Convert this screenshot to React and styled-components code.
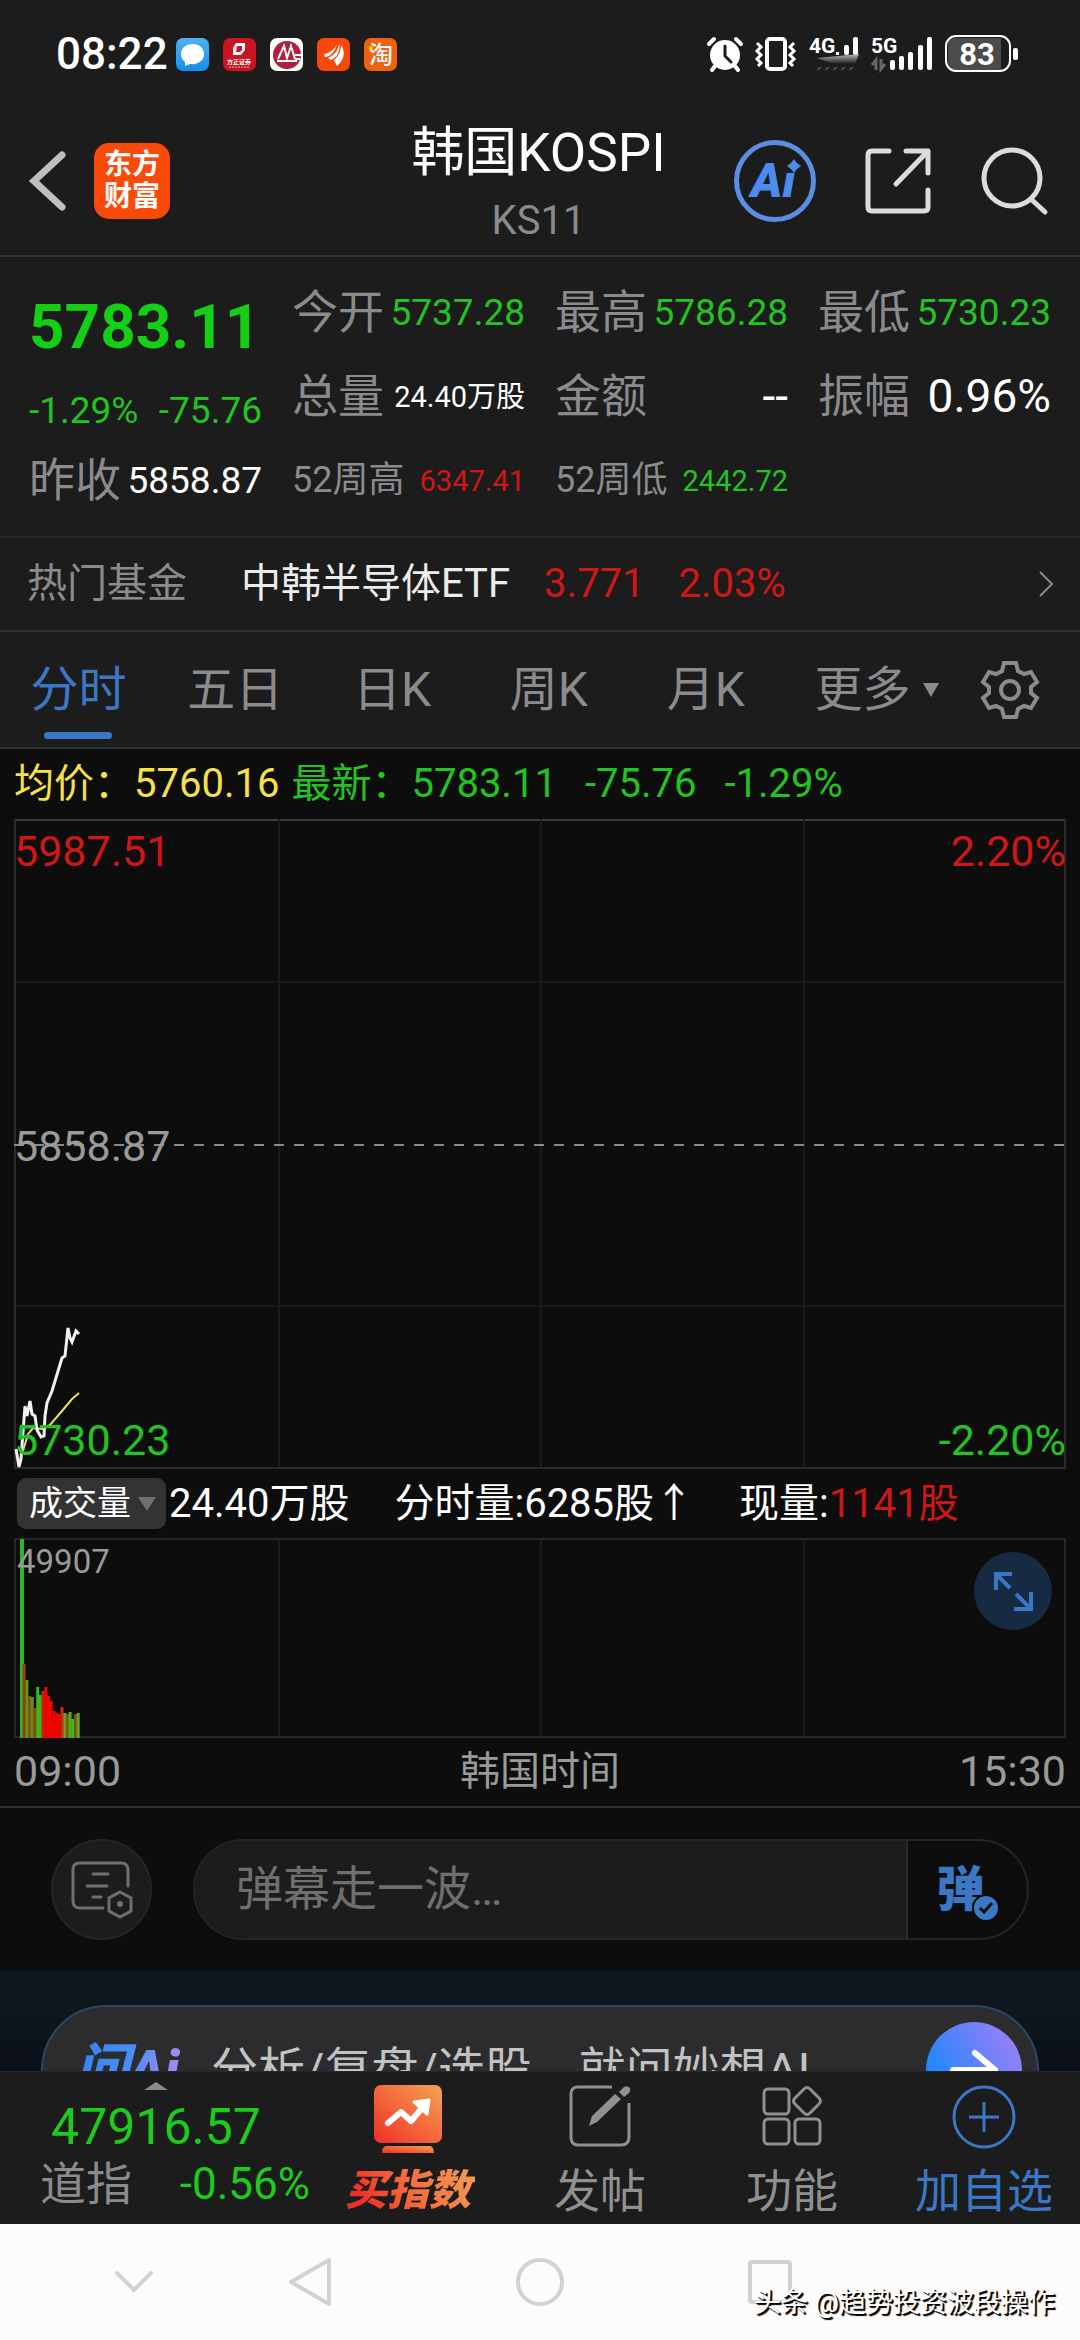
import React from 'react'
import styled, { createGlobalStyle } from 'styled-components'

const GREEN = '#22c322'
const RED = '#cf1717'
const BLUE = '#3a78c6'
const GREY = '#8b8b8d'

const stats = [
  { label: '今开', value: '5737.28', color: GREEN },
  { label: '最高', value: '5786.28', color: GREEN },
  { label: '最低', value: '5730.23', color: GREEN },
  { label: '总量', value: '24.40万股', color: '#fff', size: 29 },
  { label: '金额', value: '--', color: '#fff', size: 46 },
  { label: '振幅', value: '0.96%', color: '#fff', size: 46 },
  { label: '52周高', value: '6347.41', color: RED, size: 29, small: true },
  { label: '52周低', value: '2442.72', color: GREEN, size: 29, small: true },
]

const tabs = ['分时', '五日', '日K', '周K', '月K', '更多']

// minute volumes: [height, colour]
const volumes = [
  [199, '#2fb52a'], [74, '#9a3a10'], [58, '#5f9a1c'], [42, '#7d5a10'], [41, '#77841a'],
  [30, '#8a4a10'], [51, '#2fbf1a'], [43, '#4fae1c'], [47, '#d81c08'], [51, '#ee0500'],
  [42, '#ee0500'], [37, '#ee0500'], [27, '#ee0500'], [25, '#ee0500'], [24, '#ee0500'],
  [31, '#d42410'], [25, '#6e9a2a'], [24, '#7d5a10'], [26, '#4fae1c'], [19, '#2fbf1a'],
  [24, '#8a4a10'], [25, '#58a826'],
]

const priceLine =
  '2,630 5,648 7,640 9,613 11,587 13,597 16,582 18,595 21,597 23,611 27,618 30,617 31,597 33,584 38,572 48,539 51,537 54,509 56,519 58,523 62,512 65,515'
const avgLine = '9,632 14,615 19,609 28,610 36,606 48,592 58,580 65,574'

const App = () => {
  return (
    <Page>
      <GlobalStyle />
      <StatusBar />
      <Header />
      <Quote />
      <Fund href="#fund">
        <FundLabel>热门基金</FundLabel>
        <FundName>中韩半导体ETF</FundName>
        <FundValue>3.771</FundValue>
        <FundValue>2.03%</FundValue>
        <svg width="16" height="28" viewBox="0 0 16 28" fill="none" stroke="#8b8b8d" strokeWidth="2">
          <path d="M2 2L14 14L2 26" />
        </svg>
      </Fund>
      <Tabs>
        {tabs.map((name, i) => (
          <Tab key={name} $active={i === 0} $more={name === '更多'}>
            {name}
          </Tab>
        ))}
        <GearButton aria-label="设置">
          <svg width="58" height="60" viewBox="-29 -30 58 60" fill="none" stroke="#8b8b8d" strokeWidth="4">
            <path d="M-6 -27H6L8 -19L14 -16L21 -18L27 -8L21 -3V3L27 8L21 18L14 16L8 19L6 27H-6L-8 19L-14 16L-21 18L-27 8L-21 3V-3L-27 -8L-21 -18L-14 -16L-8 -19Z" />
            <circle r="9" />
          </svg>
        </GearButton>
      </Tabs>
      <Legend>
        <Part $color="#f7e04b">均价：5760.16</Part>
        <Part $color={GREEN}>最新：5783.11</Part>
        <Change>-75.76</Change>
        <Change>-1.29%</Change>
      </Legend>
      <PriceChart />
      <VolumeChart />
      <TimeRow>
        <TimeText>09:00</TimeText>
        <TimeZone>韩国时间</TimeZone>
        <TimeText>15:30</TimeText>
      </TimeRow>
      <Danmaku />
      <AskBanner />
      <BottomBar />
      <SystemNav />
    </Page>
  )
}

export default App

const StatusBar = () => (
  <Status>
    <Clock>08:22</Clock>
    <Apps>
      <svg width="33" height="33" viewBox="0 0 33 33">
        <defs>
          <linearGradient id="chat" x1="0" y1="0" x2="0" y2="1">
            <stop offset="0" stopColor="#4db2f5" />
            <stop offset="1" stopColor="#1290ec" />
          </linearGradient>
        </defs>
        <rect width="33" height="33" rx="7" fill="url(#chat)" />
        <path d="M17 6C10 6 5 10 5 16C5 20 7 22 9 24V28L14 26C23 27 28 22 28 16C28 10 23 6 17 6Z" fill="#fff" />
      </svg>
      <svg width="33" height="33" viewBox="0 0 33 33">
        <rect width="33" height="33" rx="7" fill="#cb1420" />
        <path d="M13 5H22V12L18 17H10V10Z M14 8L13 14H17L19 12V8Z" fill="#fff" fillRule="evenodd" />
        <text x="16" y="26" textAnchor="middle" fontSize="6" fontWeight="700" fill="#fff">方正证券</text>
        <path d="M6 29H27" stroke="#fff" strokeDasharray="2 1" opacity="0.7" />
      </svg>
      <svg width="33" height="33" viewBox="0 0 33 33">
        <rect width="33" height="33" rx="7" fill="#fff" />
        <circle cx="17" cy="17" r="14" fill="#b0213f" />
        <path d="M8 21L14 8L17 20L21 8L25 21M7 23H27M25 17H32M25 21H30" fill="none" stroke="#fff" strokeWidth="2" />
      </svg>
      <svg width="33" height="33" viewBox="0 0 33 33">
        <rect width="33" height="33" rx="7" fill="#f7480c" />
        <path d="M7 16C13 15 18 11 20 6C18 14 13 19 8 19ZM11 20C18 17 21 12 22 6C24 14 19 20 14 22ZM17 22C22 18 24 13 24 7C29 14 27 22 20 28Z" fill="#fff" />
      </svg>
      <svg width="33" height="33" viewBox="0 0 33 33">
        <rect width="33" height="33" rx="7" fill="#f0610f" />
        <text x="17" y="25" textAnchor="middle" fontSize="24" fontWeight="500" fill="#fff">淘</text>
        <circle cx="7" cy="10" r="2" fill="#ffe000" />
      </svg>
    </Apps>
    <Signals>
      <svg width="36" height="36" viewBox="0 0 36 36" fill="none" stroke="#fff" strokeLinecap="round">
        <path d="M8 30L5 34M28 30L31 34" strokeWidth="4" />
        <circle cx="18" cy="19" r="15" fill="#fff" stroke="none" />
        <path d="M2 8L7 3M34 8L29 3" strokeWidth="4" />
        <path d="M18 10V20L24 26" stroke="#1c1c1c" strokeWidth="3" />
      </svg>
      <svg width="42" height="36" viewBox="0 0 42 36" fill="none" stroke="#fff" strokeWidth="4">
        <rect x="12" y="3" width="18" height="30" rx="3" />
        <path d="M2 7L6 11L2 15L6 19L2 23L6 27L3 30M39 7L35 11L39 15L35 19L39 23L35 27L38 30" strokeWidth="3" />
      </svg>
      <svg width="50" height="36" viewBox="0 0 50 36">
        <defs>
          <linearGradient id="fade" x1="0" y1="0" x2="0" y2="1">
            <stop offset="0" stopColor="#bbb" />
            <stop offset="1" stopColor="#bbb" stopOpacity="0" />
          </linearGradient>
        </defs>
        <text x="0" y="17" fontSize="21" fontWeight="700" fill="#fff">4G</text>
        <rect x="27" y="16" width="3" height="3" fill="#fff" />
        <rect x="35" y="9" width="5" height="10" rx="2" fill="#fff" />
        <rect x="44" y="1" width="5" height="18" rx="2" fill="#fff" />
        <path d="M8 22L50 18L46 28L22 27Z" fill="url(#fade)" />
        <path d="M8 34L12 31M16 34L20 31M24 34L28 31M32 34L36 31M40 34L44 31" stroke="#4a4a4a" strokeWidth="2" />
      </svg>
      <svg width="62" height="36" viewBox="0 0 62 36">
        <text x="0" y="17" fontSize="21" fontWeight="700" fill="#fff">5G</text>
        <path d="M5 34V24L1 29M10 23V33L14 28" fill="none" stroke="#666" strokeWidth="3" />
        <g fill="#fff">
          <rect x="19" y="24" width="5" height="10" rx="2" />
          <rect x="28" y="20" width="5" height="14" rx="2" />
          <rect x="37" y="16" width="5" height="18" rx="2" />
          <rect x="47" y="9" width="5" height="25" rx="2" />
          <rect x="56" y="1" width="5" height="33" rx="2" />
        </g>
      </svg>
      <svg width="73" height="38" viewBox="0 0 73 38">
        <path d="M10 3H56V35H10Q3 35 3 28V10Q3 3 10 3Z" fill="#4b4b4b" />
        <rect x="1" y="1" width="64" height="35" rx="10" fill="none" stroke="#fff" strokeWidth="2" />
        <rect x="68" y="13" width="5" height="12" rx="2" fill="#fff" />
        <text x="32" y="30" textAnchor="middle" fontSize="31" fontWeight="700" fill="#fff">83</text>
      </svg>
    </Signals>
  </Status>
)

const Header = () => (
  <Top>
    <TopSide>
      <IconButton aria-label="返回">
        <svg width="38" height="62" viewBox="0 0 38 62" fill="none" stroke="#bfbfbf" strokeWidth="7" strokeLinecap="round">
          <path d="M33 5L5 31L33 57" strokeLinejoin="miter" />
        </svg>
      </IconButton>
      <Brand>
        <span>东方</span>
        <span>财富</span>
      </Brand>
    </TopSide>
    <TitleBox>
      <Title>韩国KOSPI</Title>
      <Code>KS11</Code>
    </TitleBox>
    <TopSide $end>
      <AiButton>
        Ai
        <svg width="14" height="14" viewBox="0 0 14 14" fill="#4c8bf0">
          <path d="M7 0L10 4L14 7L10 10L7 14L4 10L0 7L4 4Z" />
        </svg>
      </AiButton>
      <IconButton aria-label="分享">
        <svg width="66" height="66" viewBox="0 0 66 66" fill="none" stroke="#dcdcdc" strokeWidth="5" strokeLinecap="round" strokeLinejoin="round">
          <path d="M24 3H7Q3 3 3 7V59Q3 63 7 63H59Q63 63 63 59V42M41 3H63V25M63 3L31 36" />
        </svg>
      </IconButton>
      <IconButton aria-label="搜索">
        <svg width="68" height="68" viewBox="0 0 68 68" fill="none" stroke="#dcdcdc" strokeWidth="5" strokeLinecap="round">
          <circle cx="32" cy="31" r="28" />
          <path d="M52 53L65 65" />
        </svg>
      </IconButton>
    </TopSide>
  </Top>
)

const Quote = () => (
  <QuoteGrid>
    <Main>
      <Price>5783.11</Price>
      <Delta>
        <span>-1.29%</span>
        <span>-75.76</span>
      </Delta>
      <Stat>
        <StatLabel>昨收</StatLabel>
        <StatValue $color="#fff">5858.87</StatValue>
      </Stat>
    </Main>
    <Stats>
      {stats.map((s) => (
        <Stat key={s.label}>
          <StatLabel $small={s.small}>{s.label}</StatLabel>
          <StatValue $color={s.color} $size={s.size}>{s.value}</StatValue>
        </Stat>
      ))}
    </Stats>
  </QuoteGrid>
)

const PriceChart = () => (
  <Plot>
    <svg width="100%" height="650" viewBox="0 0 1052 650" preserveAspectRatio="none" fill="none">
      <path d="M0 1H1052" stroke="#3c3c3c" strokeWidth="2" />
      <path d="M265 0V650M527 0V650M790 0V650M0 163H1052M0 487H1052" stroke="#1a1a1a" strokeWidth="2" />
      <path d="M1 0V649H1051V0" stroke="#2b2b2b" strokeWidth="2" />
      <path d="M0 326H1052" stroke="#8a8a8a" strokeWidth="2" strokeDasharray="10 10" />
      <polyline points={avgLine} stroke="#f3dc5a" strokeWidth="2" />
      <polyline points={priceLine} stroke="#f2f2f2" strokeWidth="3" />
    </svg>
    <Scale>
      <ScaleRow>
        <Part $color={RED}>5987.51</Part>
        <Part $color={RED}>2.20%</Part>
      </ScaleRow>
      <ScaleRow>
        <Part $color="#9a9a9a">5858.87</Part>
      </ScaleRow>
      <ScaleRow>
        <Part $color={GREEN}>5730.23</Part>
        <Part $color={GREEN}>-2.20%</Part>
      </ScaleRow>
    </Scale>
  </Plot>
)

const VolumeChart = () => (
  <>
    <VolumeLegend>
      <Picker>
        <select aria-label="指标" defaultValue="成交量">
          <option>成交量</option>
        </select>
      </Picker>
      <Total>24.40万股</Total>
      <Total>分时量:6285股↑</Total>
      <Part $color="#fff">
        现量:<Part $color={RED}>1141股</Part>
      </Part>
    </VolumeLegend>
    <Plot>
      <svg width="100%" height="200" viewBox="0 0 1052 200" preserveAspectRatio="none" fill="none">
        <path d="M265 0V200M527 0V200M790 0V200" stroke="#1a1a1a" strokeWidth="2" />
        <rect x="1" y="1" width="1050" height="198" stroke="#272727" strokeWidth="2" />
        {volumes.map(([h, color], i) => (
          <rect key={i} x={6 + i * 2.7} y={200 - h} width={i === 0 ? 4 : 3} height={h} fill={color} />
        ))}
      </svg>
      <MaxVolume>49907</MaxVolume>
      <Expand aria-label="全屏">
        <svg width="40" height="40" viewBox="0 0 40 40" fill="none" stroke={BLUE} strokeWidth="4">
          <path d="M19 3H3V19M3 3L17 17M21 38H38V21M38 38L23 23" />
        </svg>
      </Expand>
    </Plot>
  </>
)

const Danmaku = () => (
  <DanmakuRow>
    <DanmakuSetting aria-label="弹幕设置">
      <svg width="62" height="58" viewBox="0 0 62 58" fill="none" stroke="#6f6f6f" strokeWidth="3" strokeLinecap="round">
        <path d="M32 47H9Q2 47 2 40V8Q2 2 9 2H50Q57 2 57 9V25M22 13H37M16 25H36M22 36H30" />
        <path d="M49 31L60 37V50L49 56L38 50V37Z" />
        <circle cx="49" cy="43" r="3" fill="#6f6f6f" stroke="none" />
      </svg>
    </DanmakuSetting>
    <DanmakuBox>
      <DanmakuInput aria-label="弹幕" placeholder="弹幕走一波…" />
      <DanmakuToggle>
        弹
        <svg width="28" height="28" viewBox="0 0 28 28">
          <circle cx="14" cy="14" r="13" fill={BLUE} stroke="#0d0d0d" strokeWidth="2" />
          <path d="M8 14L12 18L20 9" fill="none" stroke="#0d0d0d" strokeWidth="3" />
        </svg>
      </DanmakuToggle>
    </DanmakuBox>
  </DanmakuRow>
)

const AskBanner = () => (
  <Banner>
    <Ask href="#ask">
      <AskLogo>问Ai</AskLogo>
      <AskText>分析/复盘/选股，就问妙想AI</AskText>
      <AskGo>
        <svg width="50" height="44" viewBox="0 0 50 44" fill="none" stroke="#fff" strokeWidth="6" strokeLinecap="round" strokeLinejoin="round">
          <path d="M4 22H46M26 5L46 22L26 39" />
        </svg>
      </AskGo>
    </Ask>
  </Banner>
)

const BottomBar = () => (
  <Bottom>
    <IndexBox>
      <svg width="24" height="8" viewBox="0 0 24 8" fill="#8a8a8a">
        <path d="M0 8L12 0L24 8Z" />
      </svg>
      <IndexPrice>47916.57</IndexPrice>
      <IndexRow>
        <IndexName>道指</IndexName>
        <IndexChange>-0.56%</IndexChange>
      </IndexRow>
    </IndexBox>
    <Action>
      <svg width="68" height="70" viewBox="0 0 68 70">
        <defs>
          <linearGradient id="buy" x1="0" y1="1" x2="1" y2="0">
            <stop offset="0" stopColor="#ee2f26" />
            <stop offset="0.5" stopColor="#f4693c" />
            <stop offset="1" stopColor="#f2a356" />
          </linearGradient>
        </defs>
        <rect width="68" height="58" rx="7" fill="url(#buy)" />
        <path d="M12 61H56Q60 62 60 68H8Q8 62 12 61Z" fill="url(#buy)" />
        <path d="M14 38L27 27L37 36L50 21" fill="none" stroke="#fff" strokeWidth="6" strokeLinecap="round" strokeLinejoin="round" />
        <path d="M40 17L55 15L53 29Z" fill="#fff" stroke="#fff" strokeWidth="3" strokeLinejoin="round" />
      </svg>
      <BuyText>买指数</BuyText>
    </Action>
    <Action>
      <svg width="62" height="70" viewBox="0 0 62 70" fill="none" stroke="#909090" strokeWidth="3">
        <path d="M43 2H9Q2 2 2 9V52Q2 60 9 60H52Q60 60 60 52V18" />
        <path d="M20 41L23 31L46 9L52 14L28 37Z" fill="#909090" stroke="none" />
        <path d="M50 7L55 2Q58 0 61 3Q62 6 60 8L55 12Z" fill="#909090" stroke="none" />
      </svg>
      发帖
    </Action>
    <Action>
      <svg width="60" height="70" viewBox="0 0 60 70" fill="none" stroke="#909090" strokeWidth="3" strokeLinejoin="round">
        <rect x="2" y="4" width="25" height="25" rx="4" />
        <rect x="2" y="34" width="25" height="25" rx="4" />
        <rect x="33" y="34" width="25" height="25" rx="4" />
        <path d="M42 4Q45 1 48 4L57 13Q60 16 57 19L48 28Q45 31 42 28L33 19Q30 16 33 13Z" />
      </svg>
      功能
    </Action>
    <Action $blue>
      <svg width="64" height="70" viewBox="0 0 64 70" fill="none" stroke={BLUE} strokeWidth="3">
        <circle cx="32" cy="32" r="30" />
        <path d="M17 32H47M32 17V47" />
      </svg>
      加自选
    </Action>
  </Bottom>
)

const SystemNav = () => (
  <Nav>
    <IconButton aria-label="收起">
      <svg width="40" height="24" viewBox="0 0 40 24" fill="none" stroke="#d2d2d2" strokeWidth="4" strokeLinecap="round">
        <path d="M3 3L20 20L37 3" />
      </svg>
    </IconButton>
    <IconButton aria-label="后退">
      <svg width="44" height="50" viewBox="0 0 44 50" fill="none" stroke="#d2d2d2" strokeWidth="4" strokeLinejoin="round">
        <path d="M41 3V47L3 25Z" />
      </svg>
    </IconButton>
    <IconButton aria-label="主屏幕">
      <svg width="50" height="50" viewBox="0 0 50 50" fill="none" stroke="#d2d2d2" strokeWidth="4">
        <circle cx="25" cy="25" r="22" />
      </svg>
    </IconButton>
    <IconButton aria-label="最近任务">
      <svg width="46" height="46" viewBox="0 0 46 46" fill="none" stroke="#d2d2d2" strokeWidth="4">
        <rect x="3" y="3" width="40" height="40" rx="2" />
      </svg>
    </IconButton>
    <Watermark>头条 @趋势投资波段操作</Watermark>
  </Nav>
)

const GlobalStyle = createGlobalStyle`
  * {
    box-sizing: border-box;
  }
  body {
    margin: 0;
    background: #0d0d0d;
  }
  body, button, input, select {
    font-family: Roboto, "Noto Sans CJK SC", sans-serif;
    line-height: 1.2;
  }
  button {
    border: 0;
    padding: 0;
    background: none;
    color: inherit;
    cursor: pointer;
  }
  a {
    color: inherit;
    text-decoration: none;
  }
  svg {
    display: block;
    flex: none;
    overflow: visible;
  }
`

const Page = styled.div`
  display: flex;
  flex-direction: column;
  min-height: 100vh;
  background: #0d0d0d;
  color: #fff;
  white-space: nowrap;
`

const Status = styled.div`
  display: flex;
  align-items: center;
  height: 106px;
  padding: 2px 62px 0 56px;
  background: #1c1c1c;
`

const Clock = styled.div`
  font-size: 44px;
  font-weight: 500;
  line-height: 52px;
`

const Apps = styled.div`
  display: flex;
  gap: 14px;
  margin-left: 8px;
`

const Signals = styled.div`
  display: flex;
  align-items: center;
  gap: 12px;
  margin-left: auto;
`

const Top = styled.header`
  display: grid;
  grid-template-columns: 1fr auto 1fr;
  align-items: center;
  height: 151px;
  padding: 0 32px 0 29px;
  background: #1c1c1c;
  border-bottom: 2px solid #303030;
`

const TopSide = styled.div`
  display: flex;
  align-items: center;
  justify-content: ${({ $end }) => ($end ? 'flex-end' : 'flex-start')};
  gap: ${({ $end }) => ($end ? '49px' : '27px')};
`

const IconButton = styled.button`
  display: flex;
  align-items: center;
  justify-content: center;
`

const Brand = styled.div`
  display: flex;
  flex-direction: column;
  align-items: center;
  justify-content: center;
  width: 76px;
  height: 76px;
  border-radius: 15px;
  background: #fa4a0a;
  font-size: 28px;
  font-weight: 700;
  line-height: 32px;
`

const TitleBox = styled.div`
  text-align: center;
`

const Title = styled.h1`
  margin: 0;
  font-size: 53px;
  font-weight: 400;
  line-height: 80px;
`

const Code = styled.div`
  color: ${GREY};
  font-size: 40px;
  line-height: 56px;
`

const AiButton = styled.button`
  position: relative;
  width: 82px;
  height: 82px;
  padding-right: 4px;
  border: 5px solid #5b8de0;
  border-radius: 50%;
  color: #4c8bf0;
  font-size: 48px;
  font-weight: 900;
  font-style: italic;
  line-height: 72px;

  svg {
    position: absolute;
    top: 14px;
    right: 10px;
    background: #1c1c1c;
  }
`

const QuoteGrid = styled.section`
  display: grid;
  grid-template-columns: repeat(4, 1fr);
  column-gap: 30px;
  padding: 14px 29px 13px;
  background: #1c1c1c;
  border-bottom: 2px solid #272727;
`

const Main = styled.div`
  display: flex;
  flex-direction: column;
`

const Price = styled.div`
  color: #14d014;
  font-size: 62px;
  font-weight: 700;
  line-height: 112px;
`

const Delta = styled.div`
  display: flex;
  justify-content: space-between;
  color: ${GREEN};
  font-size: 37px;
  line-height: 56px;
`

const Stats = styled.div`
  display: grid;
  grid-column: span 3;
  grid-template-columns: repeat(3, 1fr);
  column-gap: 30px;
`

const Stat = styled.div`
  display: flex;
  align-items: center;
  justify-content: space-between;
  height: 84px;
`

const StatLabel = styled.span`
  color: ${GREY};
  font-size: ${({ $small }) => ($small ? 36 : 46)}px;
`

const StatValue = styled.span`
  color: ${({ $color }) => $color};
  font-size: ${({ $size }) => $size || 37}px;
`

const Fund = styled.a`
  display: flex;
  align-items: center;
  height: 94px;
  padding: 0 26px 0 27px;
  background: #1c1c1c;
  border-bottom: 2px solid #303030;
  font-size: 40px;

  svg {
    margin-left: auto;
  }
`

const FundLabel = styled.span`
  color: ${GREY};
`

const FundName = styled.span`
  margin-left: 54px;
  color: #ececec;
`

const FundValue = styled.span`
  margin-left: 34px;
  color: ${RED};
`

const Tabs = styled.nav`
  display: flex;
  height: 117px;
  background: #1c1c1c;
  border-bottom: 2px solid #303030;
`

const Tab = styled.button`
  position: relative;
  flex: 1;
  color: ${({ $active }) => ($active ? BLUE : GREY)};
  font-size: 48px;

  &::after {
    content: '';
    position: absolute;
    ${({ $active, $more }) =>
      $active
        ? 'left: calc(50% - 34px); bottom: 8px; width: 68px; height: 7px; border-radius: 4px; background: #3a78c6;'
        : $more
          ? 'left: calc(50% + 60px); top: 51px; border: 8px solid transparent; border-top: 14px solid #8b8b8d; border-bottom: 0;'
          : 'display: none;'}
  }
`

const GearButton = styled.button`
  display: flex;
  align-items: center;
  justify-content: center;
  width: 139px;
`

const Legend = styled.div`
  display: flex;
  align-items: center;
  height: 70px;
  padding: 0 14px;
  font-size: 40px;

  span + span {
    margin-left: 12px;
  }
`

const Part = styled.span`
  color: ${({ $color }) => $color};
`

const Change = styled.span`
  padding-left: 16px;
  color: ${GREEN};
`

const Plot = styled.section`
  position: relative;
  margin: 0 14px;
`

const Scale = styled.div`
  position: absolute;
  inset: 4px 0 1px;
  display: flex;
  flex-direction: column;
  justify-content: space-between;
`

const ScaleRow = styled.div`
  display: flex;
  justify-content: space-between;
  font-size: 43px;
  line-height: 56px;
`

const VolumeLegend = styled.div`
  display: flex;
  align-items: center;
  height: 69px;
  padding: 0 17px;
  font-size: 40px;
`

const Picker = styled.div`
  position: relative;
  margin-right: 3px;

  select {
    appearance: none;
    display: block;
    width: 149px;
    height: 51px;
    padding: 0 0 0 12px;
    border: 0;
    border-radius: 9px;
    background: #333;
    color: #fff;
    font-size: 34px;
  }

  &::after {
    content: '';
    position: absolute;
    top: 19px;
    right: 10px;
    border: 9px solid transparent;
    border-top: 14px solid #707070;
    border-bottom: 0;
    pointer-events: none;
  }
`

const Total = styled.span`
  margin-right: 45px;
`

const MaxVolume = styled.span`
  position: absolute;
  top: 4px;
  left: 3px;
  color: #9a9a9a;
  font-size: 33px;
  line-height: 40px;
`

const Expand = styled.button`
  position: absolute;
  top: 14px;
  right: 14px;
  display: flex;
  align-items: center;
  justify-content: center;
  width: 78px;
  height: 78px;
  border-radius: 50%;
  background: #172a43;
`

const TimeRow = styled.div`
  display: grid;
  grid-template-columns: 1fr auto 1fr;
  align-items: center;
  height: 70px;
  padding: 0 14px;
  border-bottom: 2px solid #303030;
  color: #9a9a9a;
`

const TimeText = styled.span`
  font-size: 43px;

  &:last-child {
    text-align: right;
  }
`

const TimeZone = styled.span`
  font-size: 40px;
`

const DanmakuRow = styled.section`
  display: flex;
  gap: 41px;
  padding: 31px 51px;
`

const DanmakuSetting = styled.button`
  display: flex;
  align-items: center;
  justify-content: center;
  width: 101px;
  height: 101px;
  border: 2px solid #252525;
  border-radius: 50%;
  background: #1c1c1c;
`

const DanmakuBox = styled.div`
  display: flex;
  flex: 1;
  height: 101px;
  overflow: hidden;
  border: 2px solid #252525;
  border-radius: 51px;
`

const DanmakuInput = styled.input`
  flex: 1;
  min-width: 0;
  padding: 0 0 0 41px;
  border: 0;
  border-right: 2px solid #2b2b2b;
  border-radius: 0;
  outline: 0;
  background: #1c1c1c;
  color: #fff;
  font-size: 47px;

  &::placeholder {
    color: #6f6f6f;
  }
`

const DanmakuToggle = styled.button`
  position: relative;
  width: 119px;
  padding-right: 14px;
  color: ${BLUE};
  font-size: 48px;
  font-weight: 900;

  svg {
    position: absolute;
    right: 27px;
    bottom: 16px;
  }
`

const Banner = styled.section`
  height: 100px;
  overflow: hidden;
  padding: 34px 41px 0;
  background: linear-gradient(#111920, #0b1018);
`

const Ask = styled.a`
  display: flex;
  align-items: center;
  height: 130px;
  padding: 0 15px 0 32px;
  border: 2px solid #2b4768;
  border-radius: 65px;
  background: #2c2c2e;
`

const AskLogo = styled.span`
  padding-right: 4px;
  background: linear-gradient(90deg, #3185f2, #4a8cf5 50%, #a78bf0);
  background-clip: text;
  color: transparent;
  font-size: 54px;
  font-weight: 900;
  font-style: italic;
`

const AskText = styled.span`
  margin-left: 28px;
  color: #c2c2c2;
  font-size: 47px;
`

const AskGo = styled.span`
  display: flex;
  align-items: center;
  justify-content: center;
  width: 96px;
  height: 96px;
  margin-left: auto;
  border-radius: 50%;
  background: linear-gradient(60deg, #1f86ff 20%, #8a80f8 80%);
`

const Bottom = styled.nav`
  display: flex;
  height: 153px;
  background: #1c1c1c;
  border-top: 1px solid #262626;
`

const IndexBox = styled.button`
  display: flex;
  flex-direction: column;
  align-items: center;
  width: 312px;
  padding-top: 10px;
`

const IndexPrice = styled.span`
  color: #1ccb1c;
  font-size: 50px;
  line-height: 74px;
`

const IndexRow = styled.span`
  display: flex;
  justify-content: space-between;
  width: 100%;
  padding: 0 2px 0 40px;
  line-height: 40px;
`

const IndexName = styled.span`
  color: ${GREY};
  font-size: 46px;
`

const IndexChange = styled.span`
  color: #1ccb1c;
  font-size: 44px;
`

const Action = styled.button`
  display: flex;
  flex: 1;
  flex-direction: column;
  align-items: center;
  padding-top: 13px;
  color: ${({ $blue }) => ($blue ? BLUE : '#909090')};
  font-size: 46px;
  line-height: 72px;
`

const BuyText = styled.span`
  padding: 0 4px;
  background: linear-gradient(60deg, #ee2f26 20%, #f4693c 50%, #f2a356);
  background-clip: text;
  color: transparent;
  font-size: 42px;
  font-weight: 900;
  font-style: italic;
`

const Nav = styled.nav`
  position: relative;
  display: grid;
  grid-template-columns: 122fr 230fr 230fr 230fr 195fr;
  flex: 1;
  min-height: 116px;
  padding-left: 73px;
  background: #fcfcfc;
`

const Watermark = styled.span`
  position: absolute;
  right: 25px;
  bottom: 19px;
  color: #fff;
  font-size: 27px;
  line-height: 36px;
  text-shadow: 2px 2px 1px #000, 1px 1px 0 #000;
`
